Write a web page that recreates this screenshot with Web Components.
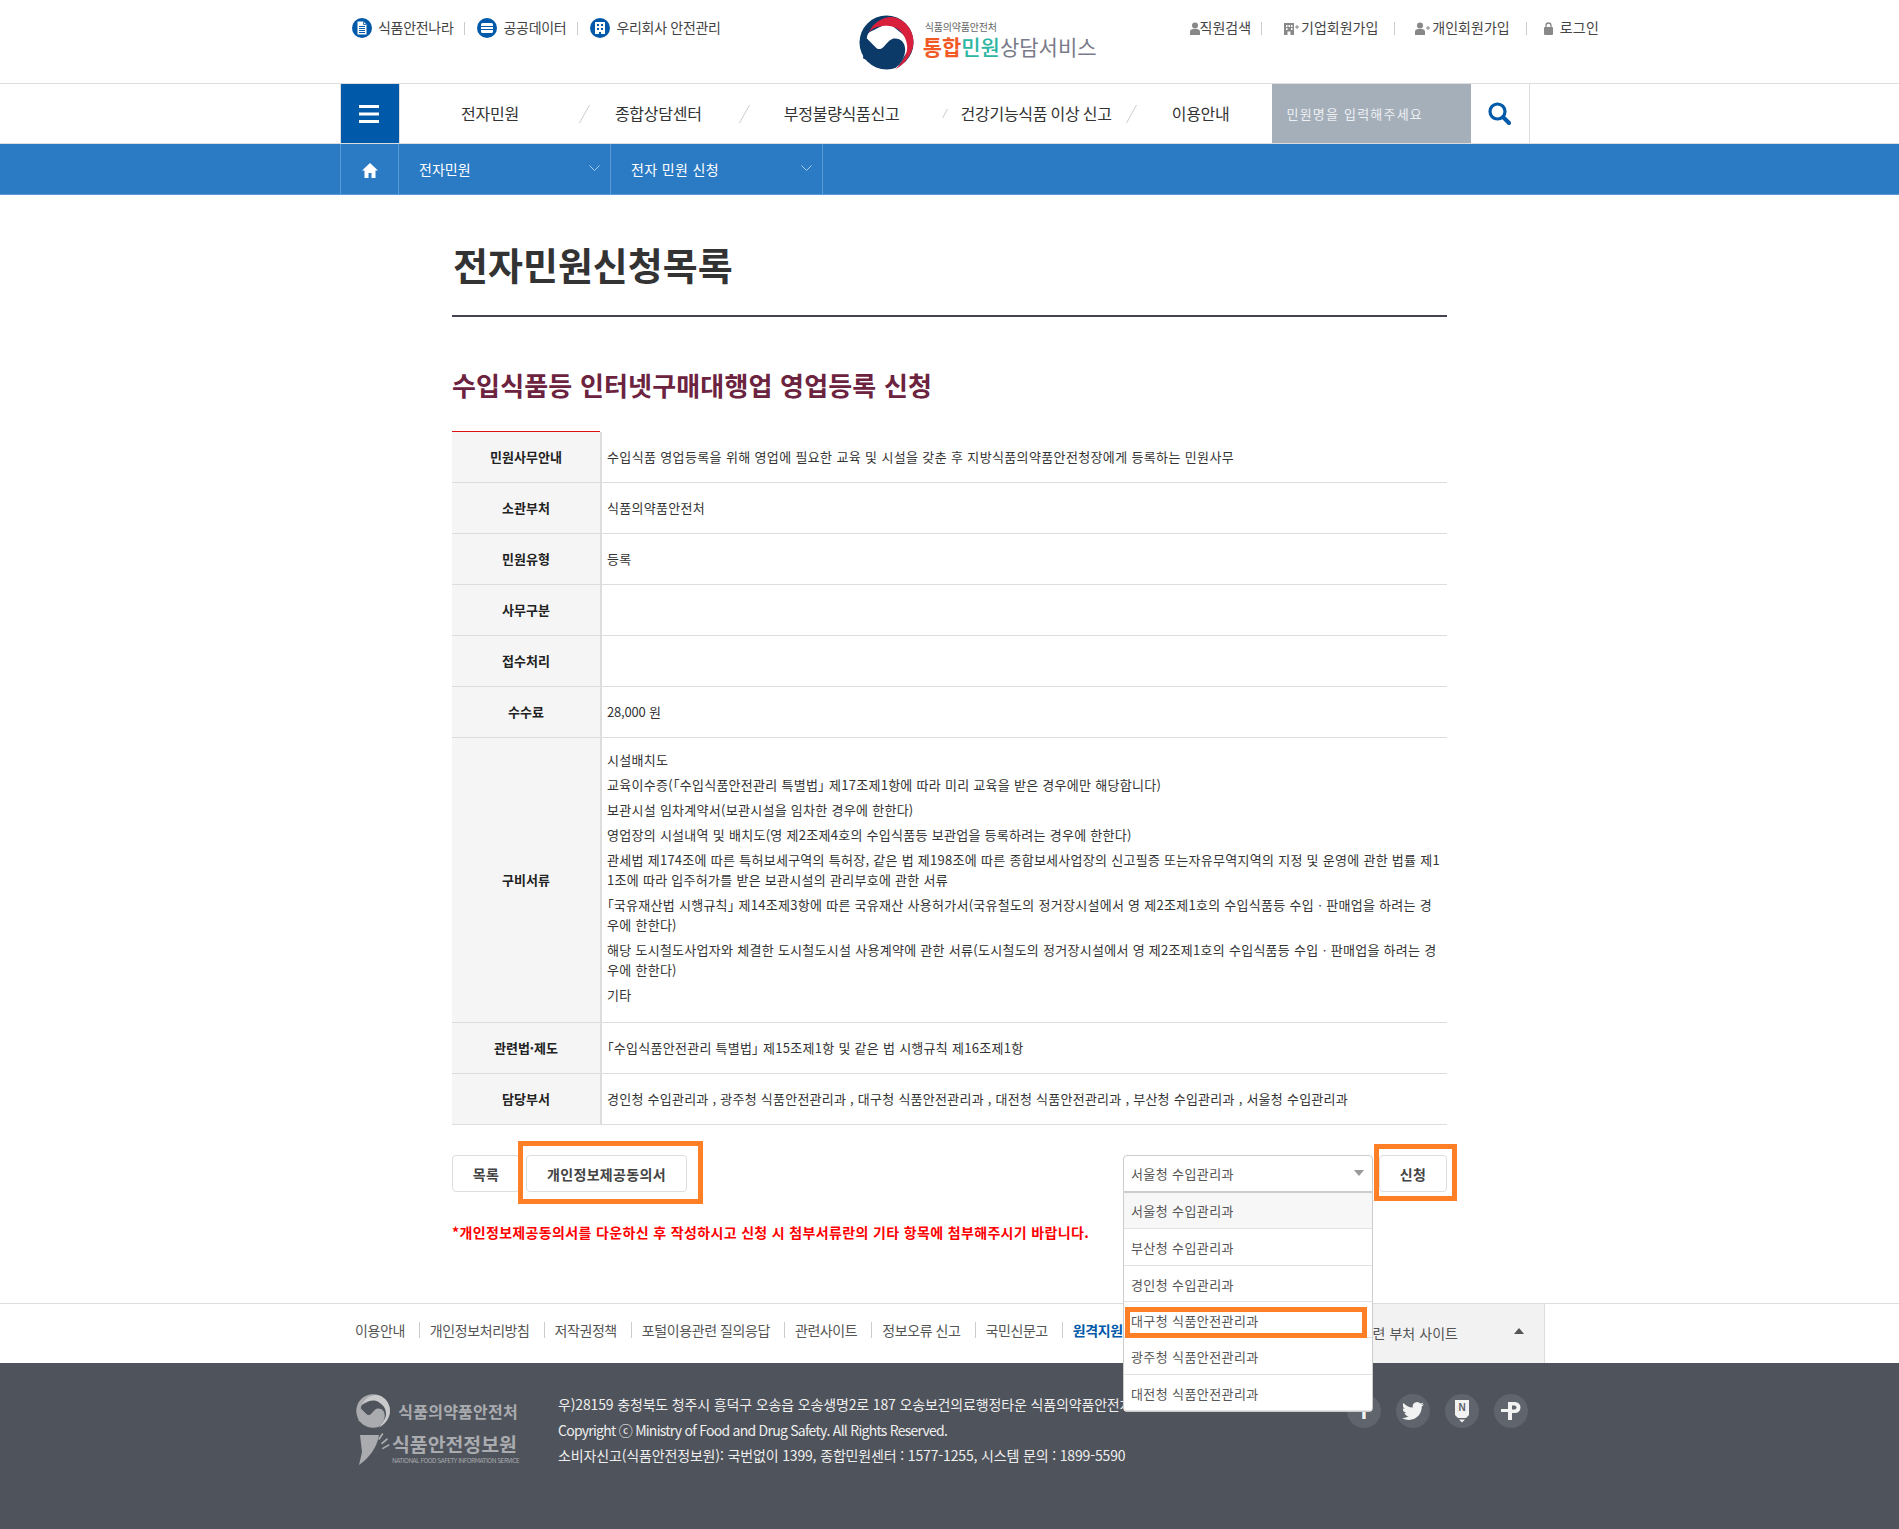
<!DOCTYPE html>
<html lang="ko"><head><meta charset="utf-8"><title>전자민원신청목록</title>
<style>
html,body{margin:0;padding:0;background:#fff}
body{font-family:"Noto Sans CJK KR","Noto Sans",sans-serif;color:#333;font-size:13px}
</style></head><body>
<top-bar></top-bar>
<main-nav></main-nav>
<sub-nav></sub-nav>
<page-main></page-main>
<link-bar></link-bar>
<site-footer></site-footer>
<script>
function def(name,html){
  customElements.define(name,class extends HTMLElement{
    constructor(){super();const s=this.attachShadow({mode:'open'});s.innerHTML=typeof html==='function'?html(this):html;}
  });
}
const FONT='font-family:"Noto Sans CJK KR","Noto Sans",sans-serif;';
function taeguk(size,c){
  return `<svg width="${size}" height="${size}" viewBox="0 0 56 56"><circle cx="28" cy="28" r="27.5" fill="${c.navy}"/>
  <path d="M8 24C8 21 9 19 10.500 17.500L30 8 55 28 38 55 24 40Z" fill="${c.white}"/>
  <path d="M8 24C10 32 17 36 23 34 27 32 29 26 35 24 42 23 47 28 47 35 47 43 42 50 37 54L24 54 4 44Z" fill="${c.navy}"/>
  <path d="M10 18C14 8 24 2 33 2 46 3 55.500 15 55.500 27 55.500 40 46 50 37 55.500 44 48 50 40 49 31 48 20 39 11 29 11 20 11 14 13 10 18Z" fill="${c.red}"/></svg>`;
}
const ICON={
 doc:`<svg width="20" height="20" viewBox="0 0 20 20"><circle cx="10" cy="10" r="10" fill="#0059a9"/><path d="M5.500 3.500h6l3 3v10h-9z" fill="#fff"/><path d="M11.500 3.500v3h3" fill="none" stroke="#0059a9" stroke-width=".8"/><path d="M7 8.500h6M7 10.500h6M7 12.500h6M7 14.500h6" stroke="#0059a9"/></svg>`,
 db:`<svg width="20" height="20" viewBox="0 0 20 20"><circle cx="10" cy="10" r="10" fill="#0059a9"/><rect x="4" y="5" width="12" height="10" rx="1.500" fill="#fff"/><path d="M4 8.500h12M4 11.500h12" stroke="#0059a9" stroke-width="1.200"/></svg>`,
 bld:`<svg width="20" height="20" viewBox="0 0 20 20"><circle cx="10" cy="10" r="10" fill="#0059a9"/><rect x="5" y="4" width="10" height="12" fill="#fff"/><path d="M7 6h2v2H7zM11 6h2v2h-2zM7 10h2v2H7zM11 10h2v2h-2zM9 14h2v2H9z" fill="#0059a9"/></svg>`,
 person:`<svg width="10" height="13" viewBox="0 0 10 13"><circle cx="5" cy="3.500" r="3" fill="#888"/><path d="M0 13V9.500C0 7.500 2 7 5 7s5 .5 5 2.500V13z" fill="#888"/></svg>`,
 bplus:`<svg width="15" height="13" viewBox="0 0 15 13"><path d="M0 1h10v12H6.500V9.500h-3V13H0z" fill="#888"/><path d="M2 3h1.500v2H2zM4.500 3H6v2H4.500zM7 3h1.500v2H7zM2 6h1.500v2H2zM7 6h1.500v2H7z" fill="#fff"/><path d="M11 5h4M13 3v4" stroke="#888"/></svg>`,
 pplus:`<svg width="15" height="13" viewBox="0 0 15 13"><circle cx="5" cy="3.500" r="3" fill="#888"/><path d="M0 13V9.500C0 7.500 2 7 5 7s5 .5 5 2.500V13z" fill="#888"/><path d="M11 6h4M13 4v4" stroke="#888"/></svg>`,
 lock:`<svg width="9" height="13" viewBox="0 0 9 13"><path d="M2 5.500V3.500a2.500 2.500 0 015 0v2" fill="none" stroke="#888" stroke-width="1.300"/><rect y="5" width="9" height="8" rx="1" fill="#888"/></svg>`
};

def('top-bar',`<style>
:host{display:flex;box-sizing:border-box;height:84px;border-bottom:1px solid #ddd;padding:18px 0 0 352px;align-items:flex-start;${FONT}}
.grp{display:flex;align-items:center;height:20px;flex:none}
.txt{font-size:14px;letter-spacing:-.3px;color:#444;white-space:nowrap;line-height:20px;padding-bottom:2px}
.l .txt{margin-left:6px}
.s{width:1px;height:13px;background:#ccc;margin:0 12px 0 11px}
.logo{display:flex;flex:none;margin:-3px 0 0 138px;align-items:flex-start}
.logo .t{margin:5px 0 0 9px;white-space:nowrap}
.t small{display:block;font-size:10px;line-height:13px;color:#666;margin-left:2px;letter-spacing:-.2px}
.t b{display:block;font-size:21px;line-height:26px;font-weight:400;color:#7a7a8a;letter-spacing:0;margin-left:0}
.t b i{font-style:normal;font-weight:700;color:#f15a24}.t b u{text-decoration:none;font-weight:500;color:#2cb5a2}
.r{margin-left:93px}
.r .txt{margin-left:0;letter-spacing:0}
.r .s{margin:0 0 0 10px}
.r svg{flex:none}
</style>
<div class="grp l">${ICON.doc}<span class="txt">식품안전나라</span><i class="s"></i>${ICON.db}<span class="txt">공공데이터</span><i class="s"></i>${ICON.bld}<span class="txt">우리회사 안전관리</span></div>
<div class="logo">${taeguk(55,{navy:'#0b3a68',white:'#fff',red:'#d8203c'})}<div class="t"><small>식품의약품안전처</small><b><i>통합</i><u>민원</u>상담서비스</b></div></div>
<div class="grp r">${ICON.person}<span class="txt">직원검색</span><i class="s" style="margin-right:22px"></i>${ICON.bplus}<span class="txt" style="margin-left:2px">기업회원가입</span><i class="s" style="margin-left:16px;margin-right:20px"></i>${ICON.pplus}<span class="txt" style="margin-left:2px">개인회원가입</span><i class="s" style="margin-left:16px;margin-right:17px"></i>${ICON.lock}<span class="txt" style="margin-left:7px;letter-spacing:.3px">로그인</span></div>`);

def('main-nav',`<style>
:host{display:flex;box-sizing:border-box;height:60px;border-bottom:1px solid #ddd;padding-left:340px;${FONT}}
.ham{flex:none;background:#0059a9;border-left:1px solid #ddd;border-right:1px solid #ddd;display:flex;align-items:center;justify-content:center;padding-right:2px;box-sizing:content-box;margin-right:-2px;width:56px}
.m{flex:none;font-size:16px;letter-spacing:-.25px;color:#333;line-height:59px;white-space:nowrap}
.sl{flex:none;align-self:center}
.q{width:199px;flex:none;box-sizing:border-box;background:#a5afba;color:#eef0f3;font-size:13px;letter-spacing:1.2px;line-height:59px;padding-left:15px;margin-left:42px;white-space:nowrap}
.b{width:58px;flex:none;border-right:1px solid #ddd;display:flex;align-items:center;justify-content:center}
</style>
<div class="ham"><svg width="20" height="18" viewBox="0 0 20 18"><path d="M0 0h20v3H0zM0 7.500h20v3H0zM0 15h20v3H0z" fill="#fff"/></svg></div>
<span class="m" style="margin-left:63px">전자민원</span>
<svg class="sl" style="margin-left:60px" width="11" height="18"><path d="M10.500 0L.5 18" stroke="#ccc"/></svg>
<span class="m" style="margin-left:25px">종합상담센터</span>
<svg class="sl" style="margin-left:37px" width="11" height="18"><path d="M10.500 0L.5 18" stroke="#ccc"/></svg>
<span class="m" style="margin-left:34px">부정불량식품신고</span>
<svg class="sl" style="margin-left:43px" width="6" height="9"><path d="M5.500 0L.5 9" stroke="#ccc"/></svg>
<span class="m" style="margin-left:12px;word-spacing:-1px">건강기능식품 이상 신고</span>
<svg class="sl" style="margin-left:14px" width="11" height="18"><path d="M10.500 0L.5 18" stroke="#ccc"/></svg>
<span class="m" style="margin-left:35px">이용안내</span>
<div class="q">민원명을 입력해주세요</div>
<div class="b"><svg width="23" height="23" viewBox="0 0 23 23"><circle cx="9.500" cy="9.500" r="7.500" fill="none" stroke="#0059a9" stroke-width="3.200"/><path d="M15 15l6 6" stroke="#0059a9" stroke-width="4" stroke-linecap="round"/></svg></div>`);

const chev=`<svg width="11" height="6" viewBox="0 0 11 6"><path d="M.5.500l5 5 5-5" fill="none" stroke="#a9cdee"/></svg>`;
def('sub-nav',`<style>
:host{display:flex;box-sizing:border-box;height:51px;background:#2a7ac4;border-bottom:1px solid #5a9ad6;padding-left:340px;color:#fff;font-size:14px;${FONT}}
.c{flex:none;box-sizing:border-box;border-left:1px solid #5b99d3;display:flex;align-items:center;height:50px}
.h{width:58px;justify-content:center;padding-top:3px}
.d{width:212px;padding:0 10px 2px 20px;justify-content:space-between;letter-spacing:0}
.d span{padding-top:2px}
.e{width:1px}
</style>
<div class="c h"><svg width="16" height="15" viewBox="0 0 16 15"><path d="M8 0L0 7.500h2.500V15h4v-5h3v5h4V7.500H16z" fill="#fff"/></svg></div>
<div class="c d"><span>전자민원</span>${chev}</div>
<div class="c d"><span style="letter-spacing:.35px">전자 민원 신청</span>${chev}</div>
<div class="c e"></div>`);

def('info-row',h=>`<style>
:host{display:grid;grid-template-columns:150px 1fr;border-bottom:1px solid #ddd;min-height:50px;${FONT}}
.th{background:#f5f5f5;border-right:2px solid #ddd;display:flex;align-items:center;justify-content:center;font-size:13px;font-weight:700;color:#222;box-sizing:border-box;padding-bottom:2px}
.td{font-size:13px;color:#333;padding:0 5px;display:flex;align-items:center;white-space:nowrap;letter-spacing:.28px}
.td>div{padding-bottom:2px}
</style><div class="th">${h.getAttribute('label')}</div><div class="td"><div><slot></slot></div></div>`);

const QL='<span style="font-feature-settings:\'palt\'">「</span>', QR='<span style="font-feature-settings:\'palt\'">」</span>';
def('doc-list',`<style>
:host{display:block;padding:12px 0 15px;font-size:13px;line-height:20px;white-space:nowrap;${FONT}color:#333;letter-spacing:.28px}
p{margin:0 0 5px}p:last-child{margin:0}
</style>
<p>시설배치도</p>
<p>교육이수증(${QL}수입식품안전관리 특별법${QR} 제17조제1항에 따라 미리 교육을 받은 경우에만 해당합니다)</p>
<p>보관시설 임차계약서(보관시설을 임차한 경우에 한한다)</p>
<p>영업장의 시설내역 및 배치도(영 제2조제4호의 수입식품등 보관업을 등록하려는 경우에 한한다)</p>
<p>관세법 제174조에 따른 특허보세구역의 특허장, 같은 법 제198조에 따른 종합보세사업장의 신고필증 또는자유무역지역의 지정 및 운영에 관한 법률 제1<br>1조에 따라 입주허가를 받은 보관시설의 관리부호에 관한 서류</p>
<p>${QL}국유재산법 시행규칙${QR} 제14조제3항에 따른 국유재산 사용허가서(국유철도의 정거장시설에서 영 제2조제1호의 수입식품등 수입ㆍ판매업을 하려는 경<br>우에 한한다)</p>
<p>해당 도시철도사업자와 체결한 도시철도시설 사용계약에 관한 서류(도시철도의 정거장시설에서 영 제2조제1호의 수입식품등 수입ㆍ판매업을 하려는 경<br>우에 한한다)</p>
<p>기타</p>`);

def('action-btn',`<style>
:host{display:inline-flex;position:relative;box-sizing:border-box;height:37px;align-items:center;justify-content:center;border:1px solid #ddd;border-radius:4px;background:#fff;font-size:14px;font-weight:700;color:#444;letter-spacing:.35px;flex:none;${FONT}}
</style><slot></slot>`);

def('mark-box',`<style>:host{display:block;position:absolute;box-sizing:border-box;border:5px solid #ff7f27;pointer-events:none;z-index:20}</style>`);

def('dept-select',`<style>
:host{display:block;position:relative;width:250px;height:37px;box-sizing:border-box;flex:none;border:1px solid #ccc;border-radius:4px 4px 0 0;background:#fff;font-size:13px;color:#555;${FONT}}
.v{line-height:35px;padding-left:7px;letter-spacing:.4px}
.a{position:absolute;right:8px;top:14px;width:0;height:0;border:5px solid transparent;border-top:6px solid #999;border-bottom:0}
.l{position:absolute;z-index:10;left:-1px;top:36px;width:250px;height:220px;box-sizing:border-box;display:grid;grid-auto-rows:1fr;background:#fff;border:1px solid #ccc;border-radius:0 0 4px 4px}
.l div{border-bottom:1px solid #e3e3e3;padding:2px 0 0 7px;display:flex;align-items:center;letter-spacing:.4px}
.l div:first-child{background:#f7f7f7;padding-top:0}.l div:last-child{border:0}
mark-box{left:1px;right:5px;top:114px;height:31px}
</style>
<div class="v">서울청 수입관리과</div><i class="a"></i>
<div class="l"><div>서울청 수입관리과</div><div>부산청 수입관리과</div><div>경인청 수입관리과</div><div>대구청 식품안전관리과</div><div>광주청 식품안전관리과</div><div>대전청 식품안전관리과</div><mark-box></mark-box></div>`);

def('page-main',`<style>
:host{display:block;box-sizing:border-box;width:995px;margin-left:452px;padding:44px 0 61px;${FONT}}
h1{margin:0;font-size:38px;line-height:50px;font-weight:700;color:#333;letter-spacing:0;padding:0 0 26px 1px;border-bottom:2px solid #45434f}
h2{margin:50px 0 28px;font-size:26px;line-height:36px;font-weight:700;color:#6b2340;white-space:nowrap;letter-spacing:.17px}
.tb{border-top:1px solid;border-image:linear-gradient(90deg,#e01010 149px,transparent 149px) 1}
.ac{display:flex;align-items:flex-start;margin-top:30px}
.note{margin:30px 0 0;font-size:14px;line-height:20px;font-weight:700;color:#f00;white-space:nowrap;letter-spacing:.35px}
</style>
<h1>전자민원신청목록</h1>
<h2>수입식품등 인터넷구매대행업 영업등록 신청</h2>
<div class="tb">
<info-row label="민원사무안내"><span style="letter-spacing:.36px">수입식품 영업등록을 위해 영업에 필요한 교육 및 시설을 갖춘 후 지방식품의약품안전청장에게 등록하는 민원사무</span></info-row>
<info-row label="소관부처">식품의약품안전처</info-row>
<info-row label="민원유형">등록</info-row>
<info-row label="사무구분"></info-row>
<info-row label="접수처리"></info-row>
<info-row label="수수료"><span style="letter-spacing:-.2px">28,000 원</span></info-row>
<info-row label="구비서류"><doc-list></doc-list></info-row>
<info-row label="관련법·제도">${QL}수입식품안전관리 특별법${QR} 제15조제1항 및 같은 법 시행규칙 제16조제1항</info-row>
<info-row label="담당부서"><span style="letter-spacing:.25px">경인청 수입관리과 , 광주청 식품안전관리과 , 대구청 식품안전관리과 , 대전청 식품안전관리과 , 부산청 수입관리과 , 서울청 수입관리과</span></info-row>
</div>
<div class="ac">
<action-btn style="width:68px">목록</action-btn>
<action-btn style="width:161px;margin-left:6px">개인정보제공동의서<mark-box style="left:-9px;right:-17px;top:-15px;bottom:-13px"></mark-box></action-btn>
<dept-select style="margin-left:436px"></dept-select>
<action-btn style="width:68px;margin-left:6px">신청<mark-box style="left:-6px;right:-11px;top:-12px;bottom:-10px"></mark-box></action-btn>
</div>
<p class="note">*개인정보제공동의서를 다운하신 후 작성하시고 신청 시 첨부서류란의 기타 항목에 첨부해주시기 바랍니다.</p>`);

def('link-bar',`<style>
:host{display:flex;box-sizing:border-box;height:60px;border-top:1px solid #ddd;padding-left:355px;font-size:14px;color:#555;letter-spacing:-.42px;position:relative;${FONT}}
.ls{display:flex;align-items:center;height:51px;flex:none;white-space:nowrap}
.s{width:1px;height:16px;background:#ccc;margin:0 10px 0 14px}
b{color:#0059a9;font-weight:700}
.x{margin-left:auto;margin-right:354px;width:300px;box-sizing:border-box;background:#f2f2f2;border-right:1px solid #ddd;display:flex;align-items:center;justify-content:flex-end;color:#555;letter-spacing:.05px;padding-bottom:2px;white-space:nowrap}
.x i{width:0;height:0;border:5px solid transparent;border-bottom:6px solid #555;border-top:0;margin:0 20px 4px 56px}
</style>
<div class="ls">이용안내<i class="s"></i>개인정보처리방침<i class="s"></i>저작권정책<i class="s"></i>포털이용관련 질의응답<i class="s"></i>관련사이트<i class="s"></i>정보오류 신고<i class="s"></i>국민신문고<i class="s"></i><b>원격지원</b></div>
<div class="x">관련 부처 사이트<i></i></div>`);

def('site-footer',`<style>
:host{display:flex;box-sizing:border-box;height:166px;background:#4f535b;padding:29px 371px 0 356px;color:#eee;${FONT}}
.lg{width:162px;flex:none;color:#a9abaf;font-weight:700;white-space:nowrap}
.r1{display:flex;align-items:center;height:36px;margin-top:1px}
.r1 span{font-size:16px;margin-left:8px;letter-spacing:.25px}
.r2{display:flex;align-items:flex-start;margin-top:2px}
.r2 div{margin-left:0}
.r2 span{display:block;font-size:19.400px;line-height:25px;letter-spacing:0}
.r2 small{display:block;font-size:6.500px;line-height:8px;letter-spacing:-.5px;font-weight:400}
.tx{margin-left:40px;font-size:14px;line-height:25.500px;white-space:nowrap;letter-spacing:-.15px;flex:none}
.tx span{letter-spacing:-.75px}
.so{margin-left:auto;display:flex;gap:15px;padding-top:2px;flex:none}
.so i{width:34px;height:34px;border-radius:50%;background:#60646c;display:flex;align-items:center;justify-content:center;font-style:normal;color:#f2f2f2;font-weight:700;font-family:"Liberation Sans",sans-serif}
</style>
<div class="lg">
<div class="r1">${taeguk(36,{navy:'#a9abaf',white:'#4f535b',red:'#c9cacc'})}<span>식품의약품안전처</span></div>
<div class="r2"><svg width="36" height="36" viewBox="0 0 36 36" style="flex:none"><path d="M4 4H23C21 17 13 27 3 34L6 21Z" fill="#a9abaf"/><path d="M26 2l-4 6 1.500 1 4-6zM31 7l-6 5 1 1.500 6-5zM33 13l-7 4 .5 1.500 7-4z" fill="#a9abaf"/></svg><div><span>식품안전정보원</span><small>NATIONAL FOOD SAFETY INFORMATION SERVICE</small></div></div>
</div>
<div class="tx">우)28159 충청북도 청주시 흥덕구 오송읍 오송생명2로 187 오송보건의료행정타운 식품의약품안전처<br><span>Copyright ⓒ Ministry of Food and Drug Safety. All Rights Reserved.</span><br>소비자신고(식품안전정보원): 국번없이 1399, 종합민원센터 : 1577-1255, 시스템 문의 : 1899-5590</div>
<div class="so">
<i style="font-size:24px">f</i>
<i><svg width="22" height="22" viewBox="0 0 24 24"><path fill="#f2f2f2" d="M23.953 4.570a10 10 0 01-2.825.775 4.958 4.958 0 002.163-2.723c-.951.555-2.005.959-3.127 1.184a4.920 4.920 0 00-8.384 4.482C7.690 8.095 4.067 6.130 1.640 3.162a4.822 4.822 0 00-.666 2.475c0 1.710.870 3.213 2.188 4.096a4.904 4.904 0 01-2.228-.616v.060a4.923 4.923 0 003.946 4.827 4.996 4.996 0 01-2.212.085 4.936 4.936 0 004.604 3.417 9.867 9.867 0 01-6.102 2.105c-.390 0-.779-.023-1.170-.067a13.995 13.995 0 007.557 2.209c9.053 0 13.998-7.496 13.985-13.985 0-.210 0-.420-.015-.630A9.935 9.935 0 0024 4.590z"/></svg></i>
<i><svg width="16" height="24" viewBox="0 0 16 24"><path d="M1 1h14v15l-3 3H4l-3-3z" fill="#f2f2f2"/><path d="M5 20.500h6l-3 3z" fill="#f2f2f2"/><text x="8" y="12" text-anchor="middle" font-size="10" font-weight="700" font-family="Liberation Sans" fill="#60646c">N</text></svg></i>
<i><svg width="22" height="20" viewBox="0 0 22 20"><path d="M1 9.500h7" stroke="#f2f2f2" stroke-width="3"/><path d="M8 1h7a5.500 5.500 0 010 11h-3v7H8z" fill="#f2f2f2"/><path d="M12 4.500h2.500a2 2 0 010 4H12z" fill="#60646c"/></svg></i>
</div>`);
</script>
</body></html>
